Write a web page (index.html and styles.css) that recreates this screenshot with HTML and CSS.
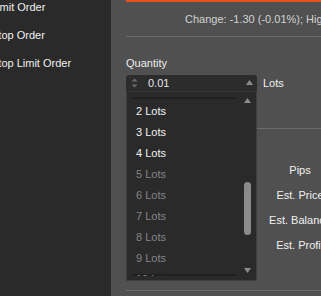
FILE: index.html
```html
<!DOCTYPE html>
<html>
<head>
<meta charset="utf-8">
<link rel="stylesheet" href="styles.css">
</head>
<body>
<div class="app">
  <aside class="sidebar">
    <div class="side-item">Limit Order</div>
    <div class="side-item">Stop Order</div>
    <div class="side-item">Stop Limit Order</div>
  </aside>
  <main class="main">
    <div class="accent"></div>
    <div class="change">Change: -1.30 (-0.01%); High: 1.1034; Low: 1.0987</div>
    <div class="rule rule-top"></div>
    <div class="label">Quantity</div>
    <div class="qty-row">
      <div class="combo">
        <div class="input">
          <svg class="spin" width="7" height="10" viewBox="0 0 7 10"><path d="M0.5 3.5L3.5 0.5L6.5 3.5Z" fill="#6c6c6c"/><path d="M0.5 6.5L3.5 9.5L6.5 6.5Z" fill="#6c6c6c"/></svg>
          <span class="value">0.01</span>
          <svg class="caret" width="7" height="5" viewBox="0 0 7 5"><path d="M0 5L3.5 0L7 5Z" fill="#8c8c8c"/></svg>
        </div>
        <div class="dropdown">
          <div class="hint hint-top"></div>
          <svg class="arrow arrow-up" width="7" height="5" viewBox="0 0 7 5"><path d="M0 5L3.5 0L7 5Z" fill="#8c8c8c"/></svg>
          <div class="hint hint-bottom"></div>
          <ul class="list">
            <li class="opt">2 Lots</li>
            <li class="opt">3 Lots</li>
            <li class="opt">4 Lots</li>
            <li class="opt off">5 Lots</li>
            <li class="opt off">6 Lots</li>
            <li class="opt off">7 Lots</li>
            <li class="opt off">8 Lots</li>
            <li class="opt off">9 Lots</li>
            <li class="opt off">10 Lots</li>
          </ul>
          <div class="thumb"></div>
          <svg class="arrow arrow-down" width="7" height="5" viewBox="0 0 7 5"><path d="M0 0L3.5 5L7 0Z" fill="#8c8c8c"/></svg>
        </div>
      </div>
      <span class="unit">Lots</span>
    </div>
    <div class="rule rule-mid"></div>
    <div class="fields">
      <div class="field"><span class="field-input"></span><span class="field-label">Pips</span></div>
      <div class="field"><span class="field-input"></span><span class="field-label">Est. Price</span></div>
      <div class="field"><span class="field-input"></span><span class="field-label">Est. Balance</span></div>
      <div class="field"><span class="field-input"></span><span class="field-label">Est. Profit</span></div>
    </div>
    <div class="rule rule-bottom"></div>
  </main>
</div>
</body>
</html>
```
FILE: styles.css
```css
html, body {
  margin: 0;
  padding: 0;
  width: 321px;
  height: 296px;
  overflow: hidden;
  background: #505050;
  font-family: "Liberation Sans", Arial, sans-serif;
  font-size: 11px;
}

.app {
  display: flex;
  height: 296px;
}

.sidebar {
  flex: 0 0 111px;
  background: #2a2a2a;
  overflow: hidden;
  display: flex;
  flex-direction: column;
}

.side-item {
  color: #f0f0f0;
  margin-left: -9px;
  height: 28px;
  line-height: 14px;
  white-space: nowrap;
}

.main {
  flex: 0 0 260px;
  padding-left: 15px;
  display: flex;
  flex-direction: column;
  background: #505050;
}

.accent {
  height: 2px;
  background: #e4521c;
  margin-right: -40px;
}

.change {
  margin-top: 10px;
  padding-left: 59px;
  line-height: 14px;
  color: #d2d2d2;
  white-space: nowrap;
}

.rule {
  height: 1px;
  background: #6b6b6b;
  margin-right: -40px;
}

.rule-top { margin-top: 10px; }

.label {
  margin-top: 19px;
  line-height: 14px;
  color: #ededed;
}

.qty-row {
  margin-top: 5px;
  display: flex;
  align-items: center;
  height: 16px;
}

.combo {
  position: relative;
  width: 131px;
  height: 16px;
}

.input {
  box-sizing: border-box;
  height: 16px;
  background: #2c2c2c;
  border-radius: 3px 3px 0 0;
  display: flex;
  align-items: center;
  padding-left: 5px;
  padding-right: 4px;
}

.spin { display: block; }

.value {
  margin-left: 10px;
  color: #e6e6e6;
  flex: 1;
}

.caret { display: block; margin-bottom: 1px; }

.unit {
  margin-left: 6px;
  color: #f0f0f0;
}

.dropdown {
  position: absolute;
  top: 16px;
  left: 0;
  width: 131px;
  height: 190px;
  box-sizing: border-box;
  background: #2a2a2a;
  border: 1px solid #3e3e3e;
  border-top-color: #353535;
  z-index: 5;
}

.hint {
  position: absolute;
  left: 6px;
  width: 104px;
  height: 2px;
  background: #202020;
}

.hint-top { top: 5px; }
.hint-bottom { top: 182px; }

.arrow {
  position: absolute;
  right: 5px;
  display: block;
}

.arrow-up { top: 6px; }
.arrow-down { top: 176px; }

.list {
  position: relative;
  list-style: none;
  margin: 0;
  padding: 9px 0 0 0;
  height: 184px;
  box-sizing: border-box;
  overflow: hidden;
}

.opt {
  height: 21px;
  line-height: 21px;
  padding-left: 9px;
  color: #f2f2f2;
}

.opt.off { color: #858585; }

.thumb {
  position: absolute;
  right: 5px;
  top: 90px;
  width: 7px;
  height: 53px;
  border-radius: 4px;
  background: #8a8a8a;
}

.rule-mid { margin-top: 37px; }

.fields {
  margin-top: 29px;
  display: flex;
  flex-direction: column;
}

.field {
  display: flex;
  height: 25px;
  line-height: 25px;
}

.field-input {
  flex: 0 0 131px;
}

.field-label {
  flex: 0 0 86px;
  text-align: center;
  color: #f0f0f0;
  white-space: nowrap;
}

.rule-bottom { margin-top: 32px; }
```
